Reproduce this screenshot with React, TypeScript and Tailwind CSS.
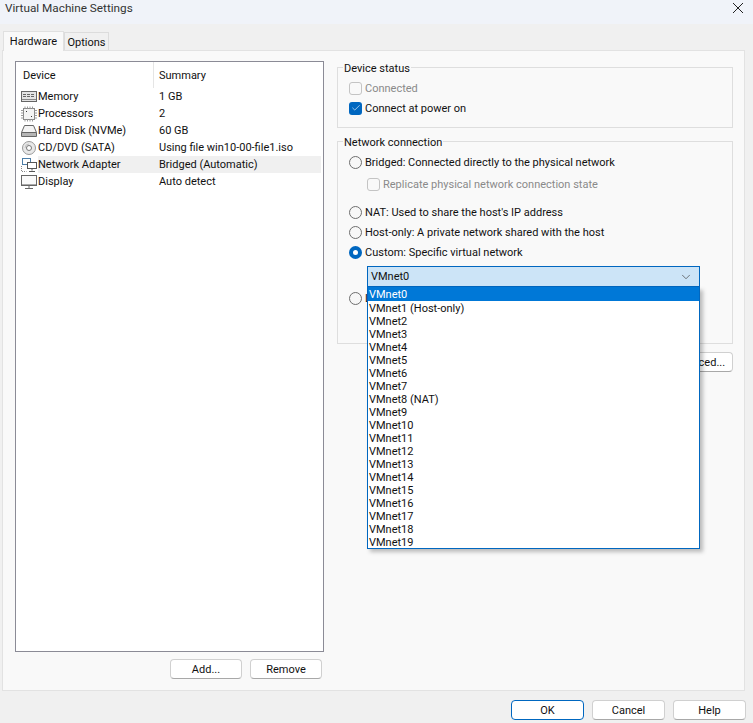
import React from "react";
import {ChevronDown, Check} from "lucide-react";

const MemoryIcon = () => (
    <svg width="17" height="16" viewBox="0 0 17 16" fill="none" stroke="#666">
        <rect x="0.5" y="2.5" width="15" height="10" fill="#e4e4e4"/>
        <path d="M2 5.500h12M2 7.500h12" stroke="#666" strokeDasharray="3 1"/>
        <path d="M1 10.500h14" stroke="#888"/>
    </svg>
);

const CpuIcon = () => (
    <svg width="17" height="16" viewBox="0 0 17 16" fill="none" stroke="#9a9a9a">
        <rect x="2.500" y="2.500" width="11" height="11" fill="#f4f4f4" stroke="#888"/>
        <path d="M4 .5v2M6.500 .5v2M9 .5v2M11.500 .5v2M4 13.500v2M6.500 13.500v2M9 13.500v2M11.500 13.500v2M0 4.500h2.500M0 7h2.500M0 9.500h2.500M0 12h2.500M13.500 4.500h2.500M13.500 7h2.500M13.500 9.500h2.500M13.500 12h2.500"/>
        <path d="M5 5.500h1M10 10.500h1" stroke="#333"/>
    </svg>
);

const DiskIcon = () => (
    <svg width="17" height="16" viewBox="0 0 17 16" fill="none" stroke="#666">
        <path d="M3.500 2.500h9l3 7v4h-15v-4z" fill="#f4f4f4"/>
        <rect x="1" y="10" width="14" height="3" fill="#b5b5b5" stroke="none"/>
        <path d="M.5 9.500h15"/>
    </svg>
);

const DiscIcon = () => (
    <svg width="17" height="16" viewBox="0 0 17 16" fill="none" stroke="#999">
        <circle cx="8" cy="8" r="6.500" fill="#e8e8e8"/>
        <circle cx="8" cy="8" r="2.500" fill="#fff" stroke="#777"/>
        <path d="M4 8a4 4 0 0 1 4-4" stroke="#c4c4c4"/>
    </svg>
);

const NetworkIcon = () => (
    <svg width="17" height="16" viewBox="0 0 17 16" fill="none">
        <rect x="1.500" y="1.500" width="8" height="6" stroke="#4d7ea8" fill="#fff"/>
        <rect x="6.500" y="5.500" width="9" height="6" stroke="#555" fill="#fff"/>
        <path d="M11 11.500v2M8 14.500h6" stroke="#555"/>
        <path d="M.5 9v5.500h5" stroke="#888" strokeDasharray="1 1"/>
    </svg>
);

const DisplayIcon = () => (
    <svg width="17" height="16" viewBox="0 0 17 16" fill="none" stroke="#666">
        <rect x="0.500" y="1.500" width="15" height="10" fill="#fafafa"/>
        <path d="M1 10.500h14" stroke="#aaa"/>
        <path d="M4 14.500h8M8 12v2"/>
    </svg>
);

const devices = [
    {name: "Memory", summary: "1 GB", icon: <MemoryIcon/>},
    {name: "Processors", summary: "2", icon: <CpuIcon/>},
    {name: "Hard Disk (NVMe)", summary: "60 GB", icon: <DiskIcon/>},
    {name: "CD/DVD (SATA)", summary: "Using file win10-00-file1.iso", icon: <DiscIcon/>},
    {name: "Network Adapter", summary: "Bridged (Automatic)", icon: <NetworkIcon/>, selected: true},
    {name: "Display", summary: "Auto detect", icon: <DisplayIcon/>},
];

const vmnets = [
    "VMnet0", "VMnet1 (Host-only)", "VMnet2", "VMnet3", "VMnet4", "VMnet5", "VMnet6", "VMnet7",
    "VMnet8 (NAT)", "VMnet9", "VMnet10", "VMnet11", "VMnet12", "VMnet13", "VMnet14", "VMnet15",
    "VMnet16", "VMnet17", "VMnet18", "VMnet19",
];

const Radio = ({checked = false, label, className = ""}: {checked?: boolean, label: string, className?: string}) => (
    <div className={"flex items-center h-5 " + className}>
        {checked
            ? <span className="w-[13px] h-[13px] rounded-full border-[4px] border-[#0067c0] bg-white shrink-0"/>
            : <span className="w-[13px] h-[13px] rounded-full border border-[#6e6e6e] bg-[#f7f7f7] shrink-0"/>}
        <span className="ml-[3px] whitespace-nowrap">{label}</span>
    </div>
);

const CheckBox = ({checked = false, disabled = false, label}: {checked?: boolean, disabled?: boolean, label: string}) => (
    <div className="flex items-center h-5">
        {checked
            ? <span className="w-[13px] h-[13px] rounded-[3px] bg-[#0067c0] flex items-center justify-center shrink-0">
                <Check size={10} color="#fff" strokeWidth={1.5}/>
            </span>
            : <span className="w-[13px] h-[13px] rounded-[3px] border border-[#c4c4c4] bg-[#f9f9f9] shrink-0"/>}
        <span className={"ml-[3px] whitespace-nowrap " + (disabled ? "text-[#8a8a8a]" : "")}>{label}</span>
    </div>
);

const Button = ({children, primary = false, className = "w-[73px]"}: {children: React.ReactNode, primary?: boolean, className?: string}) => (
    <button className={"h-5 rounded-[4px] border bg-white flex items-center justify-center "
        + (primary ? "border-[#0067c0] " : "border-[#d0d0d0] border-b-[#a8a8a8] ") + className}>
        {children}
    </button>
);

export default function App() {
    return (
        <div className="w-[753px] h-[723px] bg-[#f0f0f0] text-[#111] text-[11px] leading-[13px] font-['Roboto','Liberation_Sans',sans-serif] flex flex-col overflow-hidden">
            <div className="h-6 shrink-0 bg-[#f0f3f9] flex items-start justify-between pt-[2px] pl-[5px] pr-[10px]">
                <span className="text-[11.75px] text-[#333]">Virtual Machine Settings</span>
                <svg className="mt-px" width="10" height="10" viewBox="0 0 10 10" stroke="#222" strokeWidth="1"><path d="M0 0l10 10M10 0L0 10"/></svg>
            </div>

            <div className="flex items-end h-[26px] shrink-0 pl-[3px]">
                <div className="h-[20px] w-[61px] bg-[#f9f9f9] border border-b-0 border-[#e0e0e0] flex items-center justify-center -mb-px relative z-10">Hardware</div>
                <div className="h-[18px] w-[45px] bg-[#f0f0f0] border border-b-0 border-[#dcdcdc] flex items-center justify-center pt-px">Options</div>
            </div>

            <div className="h-[641px] w-[743px] ml-[2px] bg-[#f9f9f9] border border-[#e2e2e2] flex">
                <div className="ml-[12px] mt-[10px] w-[309px] flex flex-col">
                    <div className="h-[591px] bg-white border border-[#8b8b96] px-px">
                        <div className="flex h-[26px] items-center">
                            <span className="w-[137px] pl-[6px] border-r border-[#e5e5e5] h-full flex items-center">Device</span>
                            <span className="pl-[5px]">Summary</span>
                        </div>
                        {devices.map((d) => (
                            <div key={d.name} className="flex h-[17px] items-center">
                                <div className="flex items-center w-[137px] h-full pl-[4px] shrink-0">
                                    <span className="w-[17px] shrink-0">{d.icon}</span>
                                    <span className={"h-full flex-1 flex items-center whitespace-nowrap " + (d.selected ? "bg-[#f0f0f0]" : "")}>{d.name}</span>
                                </div>
                                <span className={"h-full flex-1 flex items-center pl-[5px] mr-px " + (d.selected ? "bg-[#f0f0f0]" : "")}>{d.summary}</span>
                            </div>
                        ))}
                    </div>
                    <div className="flex justify-end gap-[8px] mt-[7px] pr-[2px]">
                        <Button className="w-[72px]">Add...</Button>
                        <Button className="w-[72px]">Remove</Button>
                    </div>
                </div>

                <div className="ml-[13px] w-[396px] mt-[10px] flex flex-col">
                    <fieldset className="h-[67px] border border-[#dedede] pl-[11px]">
                        <legend className="-ml-[6px] px-px translate-y-px">Device status</legend>
                        <div className="mt-[4px]"><CheckBox disabled label="Connected"/></div>
                        <CheckBox checked label="Connect at power on"/>
                    </fieldset>

                    <fieldset className="h-[209px] mt-[7px] border border-[#dedede] pl-[11px] relative">
                        <legend className="-ml-[6px] px-px translate-y-px">Network connection</legend>
                        <Radio className="mt-[4px]" label="Bridged: Connected directly to the physical network"/>
                        <div className="mt-[2px] ml-[18px]"><CheckBox disabled label="Replicate physical network connection state"/></div>
                        <Radio className="mt-[8px]" label="NAT: Used to share the host's IP address"/>
                        <Radio label="Host-only: A private network shared with the host"/>
                        <Radio checked label="Custom: Specific virtual network"/>
                        <div className="mt-[4px] ml-[18px] w-[333px] h-[21px] bg-[#cce4f7] border border-[#0067c0] flex items-center justify-between pl-[3px] pr-[6px] relative">
                            <span>VMnet0</span>
                            <ChevronDown size={14} color="#444" strokeWidth={1.2}/>
                        </div>
                        <Radio className="mt-[1px]" label="L"/>

                        <div className="absolute left-[29px] top-[139px] w-[333px] h-[262px] z-20 bg-white border border-[#0067c0] border-t-0 shadow-[3px_3px_4px_rgba(0,0,0,0.25)]">
                            {vmnets.map((n, i) => (
                                <div key={n} className={"pl-[1px] flex items-center whitespace-nowrap " + (i === 0 ? "h-[14px] bg-[#0078d7] text-white" : "h-[13px] pt-[2px]")}>{n}</div>
                            ))}
                        </div>
                    </fieldset>

                    <div className="flex justify-end mt-[8px]">
                        <Button>Advanced...</Button>
                    </div>
                </div>
            </div>

            <div className="flex justify-end gap-[8px] mt-[9px] pr-[7px]">
                <Button primary>OK</Button>
                <Button>Cancel</Button>
                <Button>Help</Button>
            </div>
        </div>
    );
}
